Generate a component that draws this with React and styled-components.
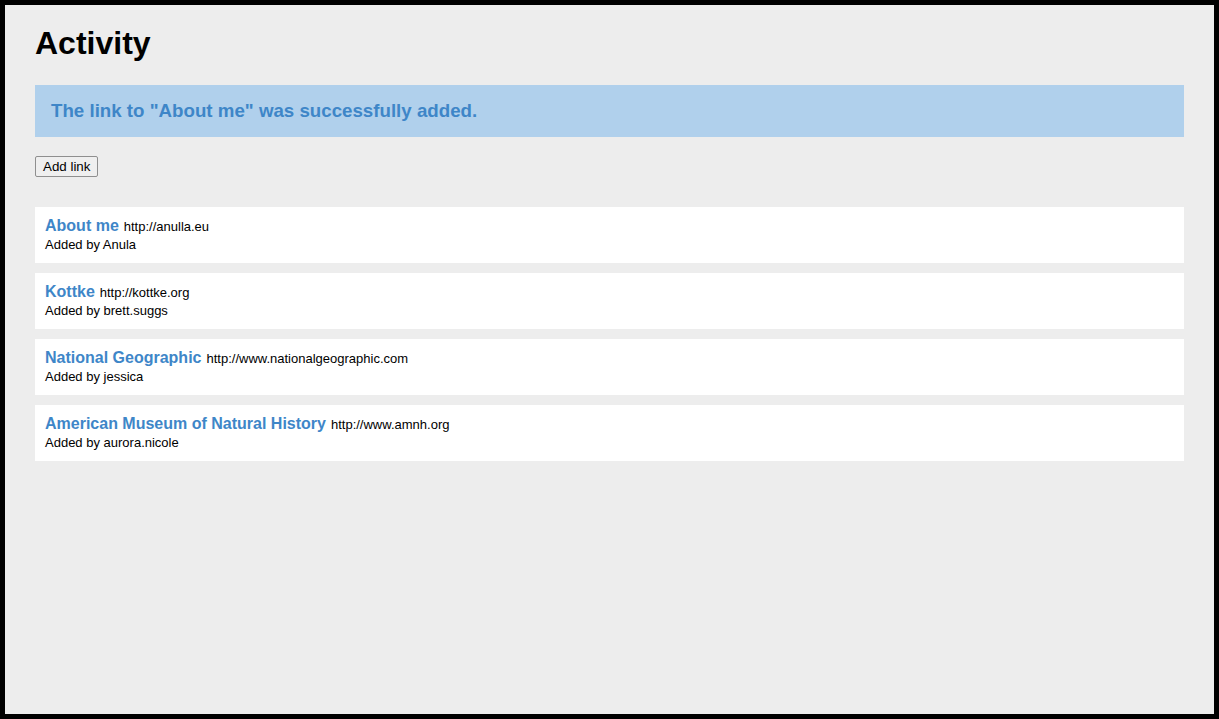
import React from 'react'
import styled, { createGlobalStyle } from 'styled-components'

const links = [
  { title: 'About me', url: 'http://anulla.eu', user: 'Anula' },
  { title: 'Kottke', url: 'http://kottke.org', user: 'brett.suggs' },
  { title: 'National Geographic', url: 'http://www.nationalgeographic.com', user: 'jessica' },
  { title: 'American Museum of Natural History', url: 'http://www.amnh.org', user: 'aurora.nicole' },
]

const GlobalStyle = createGlobalStyle`
  html, body {
    margin: 0;
    padding: 0;
  }
  body {
    font-family: "Liberation Sans", Arial, sans-serif;
    background: #000;
  }
`

const Page = styled.div`
  box-sizing: border-box;
  height: 719px;
  border: 5px solid #000;
  background: #ededed;
  padding: 20px 30px;
`

const Title = styled.h1`
  font-size: 32px;
  font-weight: bold;
  margin: 0 0 23px;
  color: #000;
`

const Alert = styled.div`
  background: #b0d0ec;
  color: #3e86c8;
  font-size: 18.72px;
  font-weight: bold;
  padding: 15px 16px;
  margin-bottom: 19px;
`

const Button = styled.button`
  font-family: "Liberation Sans", Arial, sans-serif;
  font-size: 13.33px;
  padding: 1px 7px;
  margin: 0 0 30px;
  background: #efefef;
  border: 1px solid #8f8f8f;
  border-radius: 2px;
  color: #000;
  height: 21px;
  display: block;
`

const List = styled.div`
  display: flex;
  flex-direction: column;
  gap: 10px;
`

const Card = styled.div`
  background: #fff;
  padding: 10px 10px 11px;
`

const LinkTitle = styled.span`
  color: #3e86c8;
  font-size: 16px;
  font-weight: bold;
`

const Url = styled.span`
  font-size: 13px;
  color: #000;
  margin-left: 5px;
`

const Meta = styled.div`
  font-size: 13px;
  color: #000;
  margin-top: 2px;
`

export default function App() {
  return (
    <>
      <GlobalStyle />
      <Page>
        <Title>Activity</Title>
        <Alert>The link to "About me" was successfully added.</Alert>
        <Button>Add link</Button>
        <List>
          {links.map(l => (
            <Card key={l.title}>
              <div>
                <LinkTitle>{l.title}</LinkTitle>
                <Url>{l.url}</Url>
              </div>
              <Meta>Added by {l.user}</Meta>
            </Card>
          ))}
        </List>
      </Page>
    </>
  )
}
